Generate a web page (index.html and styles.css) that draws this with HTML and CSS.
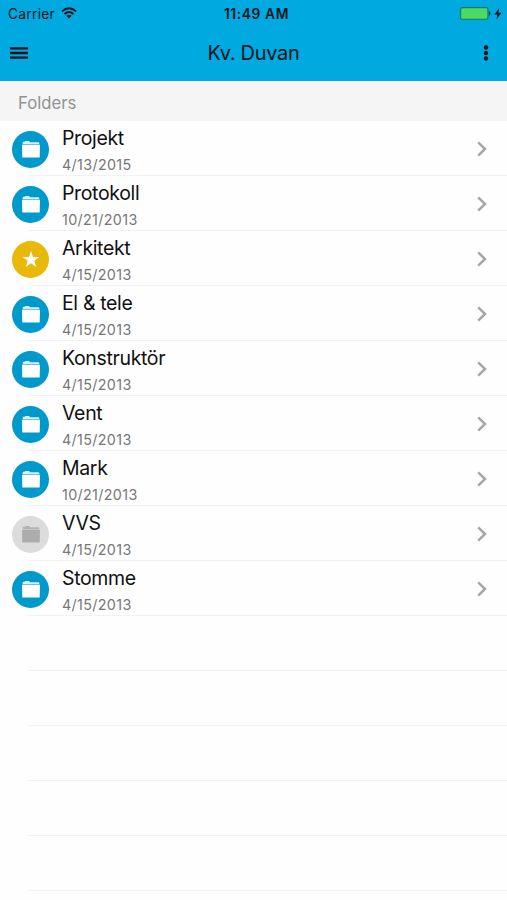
FILE: index.html
```html
<!DOCTYPE html>
<html lang="sv">
<head>
<meta charset="utf-8">
<title>Kv. Duvan</title>
<link rel="stylesheet" href="styles.css">
</head>
<body>
<svg class="defs" aria-hidden="true">
  <symbol id="folder" viewBox="0 0 18 17"><path d="M.7 3.2V1.6Q.7.9 1.5.8L2.7.7 3.4.1H7.2L8 1.2H16.3Q17.3 1.2 17.3 2.2V3.2Z" opacity=".85"/><path d="M0 3.7H18L17.7 16Q17.7 16.6 17 16.6H1Q.3 16.6.3 16Z"/></symbol>
  <symbol id="star" viewBox="0 0 18 17"><path d="M9 0 11 6H17.4L12.3 9.8 14.2 16 9 12.3 3.8 16 5.7 9.8.6 6H7Z"/></symbol>
  <symbol id="chevron" viewBox="0 0 10 16"><path d="M1.2 1.4 8 8 1.2 14.6" fill="none" stroke="#a6a6a6" stroke-width="2.5"/></symbol>
</svg>
<header class="header">
  <div class="status">
    <div class="carrier"><span>Carrier</span>
      <svg class="wifi" viewBox="0 0 16 12"><g fill="none" stroke="#08151b" stroke-width="1.9"><path d="M1 4.4Q8-1.8 15 4.4"/><path d="M3.6 7Q8 3 12.4 7"/></g><path d="M5.4 8.7Q8 6.8 10.6 8.7L8 11.5Z" fill="#08151b"/></svg>
    </div>
    <div class="clock">11:49 AM</div>
    <div class="power">
      <svg class="battery" viewBox="0 0 31 13"><rect x=".6" y=".6" width="27.3" height="11.6" rx="1.8" fill="#4cd964" stroke="#17775f" stroke-width="1.1"/><path d="M28.8 4.3Q30.5 4.5 30.5 6.4T28.8 8.5Z" fill="#102c35"/></svg>
      <svg class="bolt" viewBox="0 0 8 12"><path d="M5.3 0 .4 6.6H3.5L2.5 11.6 7.4 4.8H4.4Z" fill="#071418"/></svg>
    </div>
  </div>
  <nav class="bar">
    <svg class="menu" viewBox="0 0 18 13"><path d="M0 1.3H18M0 6H18M0 10.7H18" stroke="#07151b" stroke-width="2.3"/></svg>
    <h1 class="title">Kv. Duvan</h1>
    <svg class="more" viewBox="0 0 6 16"><g fill="#07151b"><circle cx="3" cy="2.5" r="2.2"/><circle cx="3" cy="8" r="2.2"/><circle cx="3" cy="13.5" r="2.2"/></g></svg>
  </nav>
</header>
<h2 class="section"><span>Folders</span></h2>
<ul class="list">
  <li class="row"><span class="badge"><svg><use href="#folder"/></svg></span><div class="text"><span class="name">Projekt</span><span class="date">4/13/2015</span></div><svg class="chev"><use href="#chevron"/></svg></li>
  <li class="row"><span class="badge"><svg><use href="#folder"/></svg></span><div class="text"><span class="name">Protokoll</span><span class="date">10/21/2013</span></div><svg class="chev"><use href="#chevron"/></svg></li>
  <li class="row"><span class="badge gold"><svg><use href="#star"/></svg></span><div class="text"><span class="name">Arkitekt</span><span class="date">4/15/2013</span></div><svg class="chev"><use href="#chevron"/></svg></li>
  <li class="row"><span class="badge"><svg><use href="#folder"/></svg></span><div class="text"><span class="name">El &amp; tele</span><span class="date">4/15/2013</span></div><svg class="chev"><use href="#chevron"/></svg></li>
  <li class="row"><span class="badge"><svg><use href="#folder"/></svg></span><div class="text"><span class="name">Konstruktör</span><span class="date">4/15/2013</span></div><svg class="chev"><use href="#chevron"/></svg></li>
  <li class="row"><span class="badge"><svg><use href="#folder"/></svg></span><div class="text"><span class="name">Vent</span><span class="date">4/15/2013</span></div><svg class="chev"><use href="#chevron"/></svg></li>
  <li class="row"><span class="badge"><svg><use href="#folder"/></svg></span><div class="text"><span class="name">Mark</span><span class="date">10/21/2013</span></div><svg class="chev"><use href="#chevron"/></svg></li>
  <li class="row"><span class="badge off"><svg><use href="#folder"/></svg></span><div class="text"><span class="name">VVS</span><span class="date">4/15/2013</span></div><svg class="chev"><use href="#chevron"/></svg></li>
  <li class="row"><span class="badge"><svg><use href="#folder"/></svg></span><div class="text"><span class="name">Stomme</span><span class="date">4/15/2013</span></div><svg class="chev"><use href="#chevron"/></svg></li>
  <li class="row"></li>
  <li class="row"></li>
  <li class="row"></li>
  <li class="row"></li>
  <li class="row"></li>
</ul>
</body>
</html>
```
FILE: styles.css
```css
* { box-sizing: border-box; }
body {
  margin: 0;
  height: 900px;
  overflow: hidden;
  background: #fefefe;
  font-family: Inter, "Liberation Sans", sans-serif;
  color: #111;
}
svg { display: block; flex: none; }
.defs { display: none; }
.header { height: 81px; background: #00a9e0; color: #07151b; }
.status {
  display: grid;
  grid-template-columns: 1fr auto 1fr;
  align-items: center;
  height: 27px;
  padding: 0 5px 0 8px;
}
.carrier { display: flex; align-items: center; gap: 6px; font-size: 13.8px; letter-spacing: .25px; }
.wifi { width: 16px; height: 12px; margin-top: -2px; }
.clock { margin-left: 3px; font-size: 13.8px; font-weight: 600; letter-spacing: .6px; }
.power { display: flex; align-items: center; justify-content: flex-end; gap: 3px; }
.battery { width: 31px; height: 13px; }
.bolt { width: 8px; height: 12px; }
.bar {
  display: grid;
  grid-template-columns: 1fr auto 1fr;
  align-items: center;
  height: 52px;
  padding: 0 18px 0 10px;
}
.menu { width: 18px; height: 13px; }
.title { margin: 0 0 0 8px; font-size: 20px; font-weight: 400; letter-spacing: -.3px; }
.more { width: 6px; height: 16px; justify-self: end; }
.section {
  display: flex;
  align-items: center;
  height: 40px;
  margin: 0;
  padding: 3px 18px 0;
  background: #f5f5f5;
  color: #929292;
  font-size: 16.7px;
  font-weight: 400;
}
.list { margin: 0; padding: 0; list-style: none; }
.row {
  display: flex;
  align-items: center;
  height: 55px;
  padding: 0 20px 0 12px;
  background: linear-gradient(#f2f2f2, #f2f2f2) 28px 100% / 100% 1px no-repeat;
}
.badge {
  display: flex;
  align-items: center;
  justify-content: center;
  width: 37px;
  height: 37px;
  margin-top: 1px;
  border-radius: 50%;
  background: #0099cc;
  fill: #fff;
}
.badge svg { width: 18px; height: 17px; }
.gold { background: #e8b90a; }
.off { background: #dcdcdc; fill: #acacac; }
.text { flex: 1; display: flex; flex-direction: column; margin-left: 13px; padding-top: 8px; }
.name { font-size: 19.5px; line-height: 25px; letter-spacing: -.35px; }
.date { font-size: 14.3px; line-height: 28px; color: #777; letter-spacing: .35px; }
.chev { width: 10px; height: 16px; }
```
